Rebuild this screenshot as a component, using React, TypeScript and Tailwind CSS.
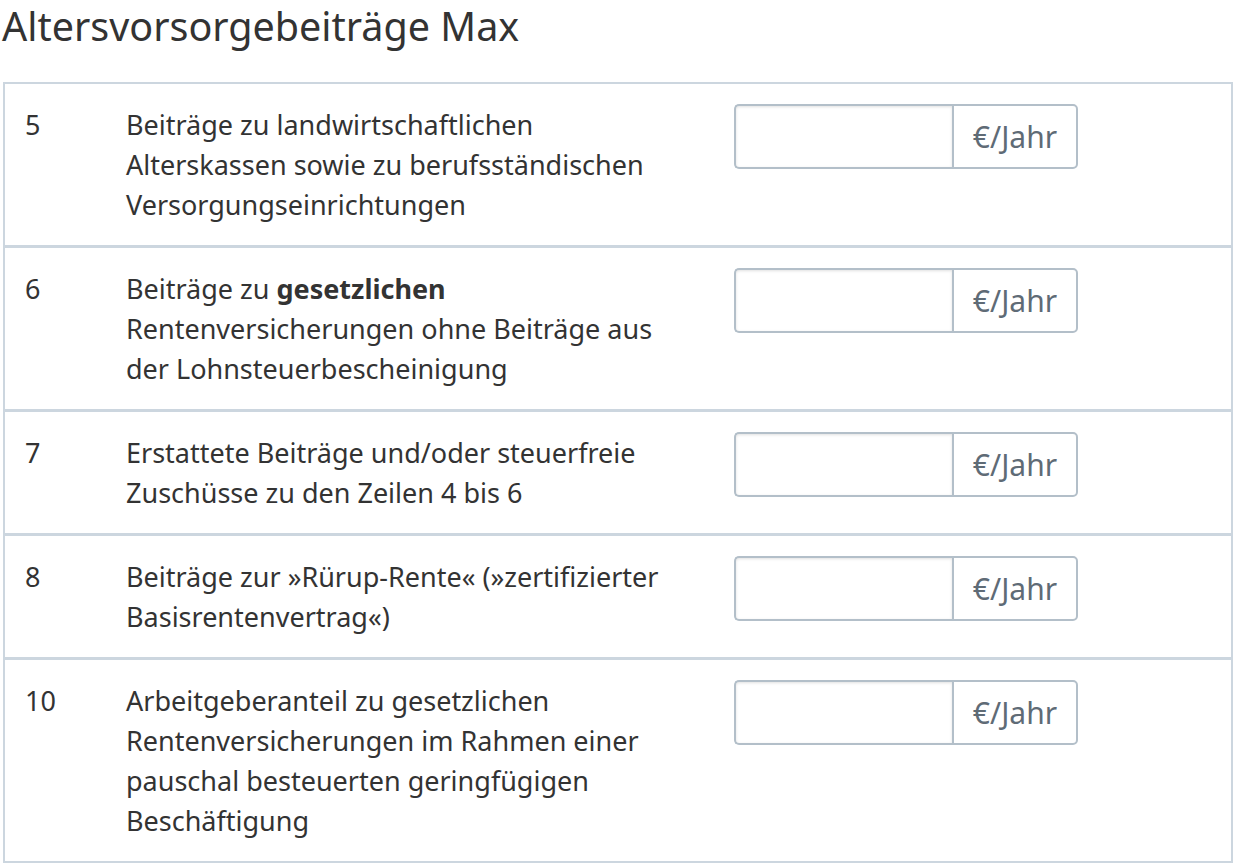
import React from 'react';

interface Row {
  nr: string;
  lines: React.ReactNode[];
}

const rows: Row[] = [
  {
    nr: '5',
    lines: ['Beiträge zu landwirtschaftlichen', 'Alterskassen sowie zu berufsständischen', 'Versorgungseinrichtungen'],
  },
  {
    nr: '6',
    lines: [
      <>
        Beiträge zu <strong className="font-bold">gesetzlichen</strong>
      </>,
      'Rentenversicherungen ohne Beiträge aus',
      'der Lohnsteuerbescheinigung',
    ],
  },
  {
    nr: '7',
    lines: ['Erstattete Beiträge und/oder steuerfreie', 'Zuschüsse zu den Zeilen 4 bis 6'],
  },
  {
    nr: '8',
    lines: ['Beiträge zur »Rürup-Rente« (»zertifizierter', 'Basisrentenvertrag«)'],
  },
  {
    nr: '10',
    lines: [
      'Arbeitgeberanteil zu gesetzlichen',
      'Rentenversicherungen im Rahmen einer',
      'pauschal besteuerten geringfügigen',
      'Beschäftigung',
    ],
  },
];

const App: React.FC = () => {
  return (
    <div className="min-h-screen bg-white font-['Noto_Sans',sans-serif] text-[#333]">
      <h1 className="pl-[2px] pt-0 text-[39.5px] leading-[52px] text-[#333]">Altersvorsorgebeiträge Max</h1>

      <div className="ml-[3px] mt-[30px] w-[1230px] border-2 border-[#ccd6df]">
        {rows.map((row, i) => (
          <div
            key={row.nr}
            className={`flex px-5 pt-5 pb-5 ${i > 0 ? 'border-t-[3px] border-[#ccd6df]' : ''}`}
          >
            <div className="w-[101px] shrink-0 pt-px text-[27px] leading-[40px]">{row.nr}</div>
            <div className="w-[567px] shrink-0 whitespace-nowrap pt-px text-[27px] leading-[40px]">
              {row.lines.map((line, j) => (
                <div key={j}>{line}</div>
              ))}
            </div>
            <div className="ml-[41px] flex h-[65px] w-[344px] shrink-0">
              <input
                type="text"
                className="h-full w-[218px] rounded-l-[5px] border-2 border-r-0 border-[#b3bfc9] bg-white shadow-[inset_0_1px_3px_rgba(0,0,0,0.12)] outline-none"
              />
              <span className="flex h-full flex-1 items-center justify-center rounded-r-[5px] border-2 border-[#b3bfc9] bg-white text-[30px] text-[#5f6b76]">
                €/Jahr
              </span>
            </div>
          </div>
        ))}
      </div>
    </div>
  );
};

export default App;
